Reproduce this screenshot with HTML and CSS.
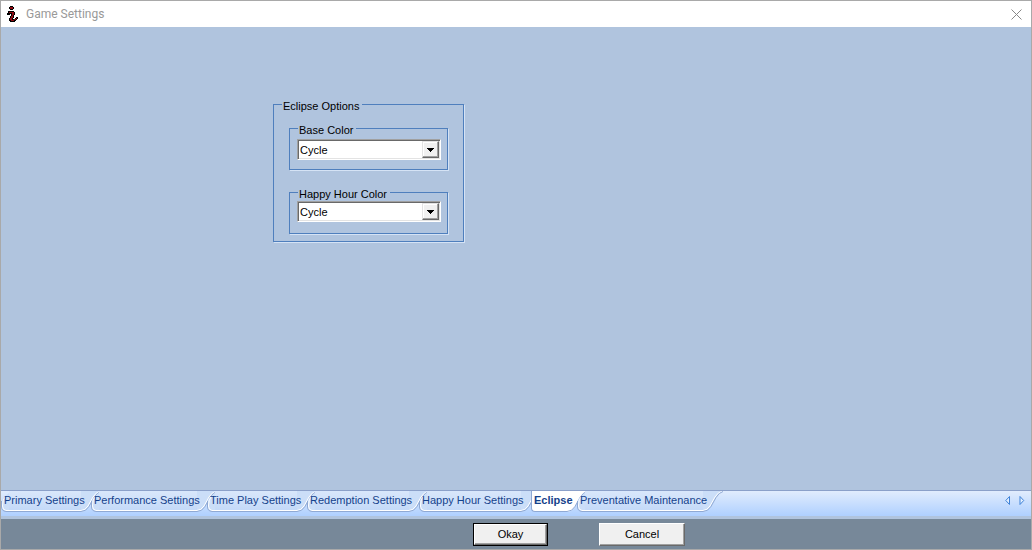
FILE: index.html
```html
<!DOCTYPE html>
<html lang="en">
<head>
<meta charset="utf-8">
<title>Game Settings</title>
<link rel="stylesheet" href="styles.css">
</head>
<body>
<form class="dialog">
  <header class="titlebar">
    <svg class="logo" width="12" height="16" viewBox="0 0 12 16" shape-rendering="crispEdges" aria-hidden="true">
      <path d="M3 0h3v1h1v2h-1v1h-3v-1h-1v-2h1zM1 5h6v1h1v3h-1v3h-1v1h2v-1h1v-1h2v2h-1v1h-1v1h-1v1h-5v-1h-1v-3h1v-2h1v-2h-1v1h-3v-2h1z" fill="#000"/>
      <path d="M3 1h3v2h-3zM2 6h5v3h-1v3h-1v2h2v1h-3v-1h-1v-2h1v-2h1v-3h-3zM7 13h2v-1h1v1h-1v1h-2z" fill="#8e0a12"/>
    </svg>
    <h1 class="title">Game Settings</h1>
    <button class="close" type="button" aria-label="Close">
      <svg width="11" height="11" viewBox="0 0 11 11"><path d="M.5.5l10 10M10.500.5l-10 10" stroke="#888" fill="none"/></svg>
    </button>
  </header>

  <main class="page">
    <fieldset class="group group-outer">
      <legend>Eclipse Options</legend>
      <fieldset class="group group-inner">
        <legend><label for="base">Base Color</label></legend>
        <div class="combo">
          <select id="base"><option>Cycle</option></select>
          <span class="arrow"><svg width="7" height="4" viewBox="0 0 7 4"><path d="M0 0h7v1h-1v1h-1v1h-1v1h-1v-1h-1v-1h-1v-1h-1z"/></svg></span>
        </div>
      </fieldset>
      <fieldset class="group group-inner">
        <legend><label for="happy">Happy Hour Color</label></legend>
        <div class="combo combo-tight">
          <select id="happy"><option>Cycle</option></select>
          <span class="arrow"><svg width="7" height="4" viewBox="0 0 7 4"><path d="M0 0h7v1h-1v1h-1v1h-1v1h-1v-1h-1v-1h-1v-1h-1z"/></svg></span>
        </div>
      </fieldset>
    </fieldset>
  </main>

  <svg width="0" height="0" class="defs" aria-hidden="true">
    <symbol id="cap-left" viewBox="0 0 8 21">
      <path class="cap-fill" d="M8 2L3 6Q0 9 0 15Q0 20 5 21H8z"/>
      <path class="cap-light" d="M4 6Q1.500 9 1.500 15Q1.500 19 5 19.500H8"/>
      <path class="cap-dark" d="M.5 10V16Q.5 20 5 20.500H8"/>
    </symbol>
    <symbol id="cap-right" viewBox="0 0 20 21">
      <path class="cap-fill" d="M0 0H20Q16 1 13 6L8 15Q5 21 0 21z"/>
      <path class="cap-light" d="M19 .5Q15 1 12 6L7 15Q4 19.500 0 19.500"/>
      <path class="cap-dark" d="M20 .5Q16 1.500 13 6.500L8 15.500Q5 20.500 0 20.500"/>
    </symbol>
  </svg>

  <nav class="tabstrip">
    <div class="tabs" role="tablist">
      <button type="button" role="tab" class="tab"><svg class="left"><use href="#cap-left"/></svg><svg class="right"><use href="#cap-right"/></svg><span>Primary Settings</span></button>
      <button type="button" role="tab" class="tab"><svg class="left"><use href="#cap-left"/></svg><svg class="right"><use href="#cap-right"/></svg><span>Performance Settings</span></button>
      <button type="button" role="tab" class="tab"><svg class="left"><use href="#cap-left"/></svg><svg class="right"><use href="#cap-right"/></svg><span>Time Play Settings</span></button>
      <button type="button" role="tab" class="tab"><svg class="left"><use href="#cap-left"/></svg><svg class="right"><use href="#cap-right"/></svg><span>Redemption Settings</span></button>
      <button type="button" role="tab" class="tab"><svg class="left"><use href="#cap-left"/></svg><svg class="right"><use href="#cap-right"/></svg><span>Happy Hour Settings</span></button>
      <button type="button" role="tab" class="tab active" aria-selected="true"><svg class="right"><use href="#cap-right"/></svg><span>Eclipse</span></button>
      <button type="button" role="tab" class="tab"><svg class="left"><use href="#cap-left"/></svg><svg class="right"><use href="#cap-right"/></svg><span>Preventative Maintenance</span></button>
    </div>
    <div class="scrollers">
      <button type="button" aria-label="Previous tabs"><svg width="6" height="9" viewBox="0 0 6 9"><path d="M4.500.5v8L.8 4.500z"/></svg></button>
      <button type="button" aria-label="Next tabs"><svg width="6" height="9" viewBox="0 0 6 9"><path d="M1 .5v8L4.700 4.500z"/></svg></button>
    </div>
  </nav>

  <footer class="actions">
    <span class="default-ring"><button type="submit" class="btn">Okay</button></span>
    <button type="button" class="btn btn-cancel">Cancel</button>
  </footer>
</form>
</body>
</html>
```
FILE: styles.css
```css
* { box-sizing: border-box; }

body {
  margin: 0;
  font: 11px/13px "Liberation Sans", Arial, sans-serif;
  color: #000;
}

button, select {
  font: inherit;
  color: inherit;
  border: 0;
  border-radius: 0;
  margin: 0;
  padding: 0;
  background: none;
}

.dialog {
  display: flex;
  flex-direction: column;
  min-height: 100vh;
  border: 1px solid #a9a9a9;
  background: #b0c4de;
}

.titlebar {
  display: flex;
  align-items: center;
  height: 26px;
  padding: 0 9px 0 6px;
  background: #fff;
}

.title {
  flex: 1;
  margin: 0 0 0 7px;
  font: 12px/16px Roboto, "Open Sans", sans-serif;
  color: #999;
}

.close, .close svg { display: block; }

.page {
  flex: 1;
  padding: 68px 0 0 272px;
}

.group {
  min-width: 0;
  margin: 0;
  border: 1px solid #4f7fbd;
  box-shadow: 1px 1px 0 #d5e3f5;
}

.group legend {
  margin-left: 1px;
  padding: 5px 3px 0 1px;
}

.group-outer {
  width: 191px;
  padding: 6px 15px 7px;
}
.group-outer > legend { margin-left: -7px; }

.group-inner { padding: 2px 6px 9px 7px; }
.group-inner + .group-inner { margin-top: 13px; }

.combo {
  display: flex;
  height: 21px;
  border: 1px solid;
  border-color: #a0a0a0 #fff #fff #a0a0a0;
  background: #fff;
  box-shadow: inset 1px 1px 0 #696969, inset -1px -1px 0 #e3e3e3;
}
.combo-tight { margin: -2px 0 2px; }

.combo select {
  flex: 1;
  min-width: 0;
  padding: 1px 0 0 2px;
  appearance: none;
  outline: 0;
}

.arrow {
  display: grid;
  place-items: center;
  width: 17px;
  margin: 1px;
  border: 1px solid;
  border-color: #e3e3e3 #696969 #696969 #e3e3e3;
  background: #f0f0f0;
  box-shadow: inset -1px -1px 0 #a0a0a0, inset 1px 1px 0 #fff;
}

.defs { position: absolute; }

.tabstrip {
  display: flex;
  justify-content: space-between;
  height: 26px;
  border-top: 1px solid #8ba0c9;
  background: linear-gradient(#e1ecfd, #afd0ff);
}

.tabs {
  display: grid;
  grid-template-columns: 90px 116px 100px 112px 112px 46px auto;
}

.tab {
  --fill: #cbdef8;
  position: relative;
  height: 21px;
  padding: 0 6px 3px 3px;
  color: #15428b;
  text-align: left;
  white-space: nowrap;
}
.tab span { position: relative; }

.tab::before {
  content: "";
  position: absolute;
  inset: 0 10px 0 8px;
  border-bottom: 1px solid #8fa9d4;
  background: linear-gradient(#d9e7fb, #c3d9f8);
  box-shadow: inset 0 -1px 0 #fff;
}

.left, .right { position: absolute; top: 0; height: 21px; }
.left { left: 0; width: 8px; }
.right { right: -10px; width: 20px; }

.cap-fill { fill: var(--fill); }
.cap-light { fill: none; stroke: #fff; }
.cap-dark { fill: none; stroke: #8fa9d4; }

.active {
  --fill: #fff;
  padding-right: 0;
  font-weight: bold;
}
.active::before {
  left: 0;
  border-left: 1px solid #8fa9d4;
  border-bottom-left-radius: 4px;
  background: #fff;
}

.scrollers {
  display: flex;
  gap: 8px;
  height: 18px;
  padding-right: 6px;
}
.scrollers svg {
  display: block;
  fill: #e5f0ff;
  stroke: #3f82d8;
}

.actions {
  display: flex;
  align-items: flex-start;
  gap: 51px;
  height: 33px;
  padding: 4px 0 0 472px;
  border-top: 3px solid #b0c4de;
  background: #778899;
}

.default-ring {
  display: flex;
  border: 1px solid #000;
}

.btn {
  width: 73px;
  height: 21px;
  padding-bottom: 1px;
  border: 1px solid;
  border-color: #fff #696969 #696969 #fff;
  background: #f0f0f0;
  box-shadow: inset -1px -1px 0 #a0a0a0;
}
.btn-cancel {
  width: 86px;
  height: 23px;
}
```
